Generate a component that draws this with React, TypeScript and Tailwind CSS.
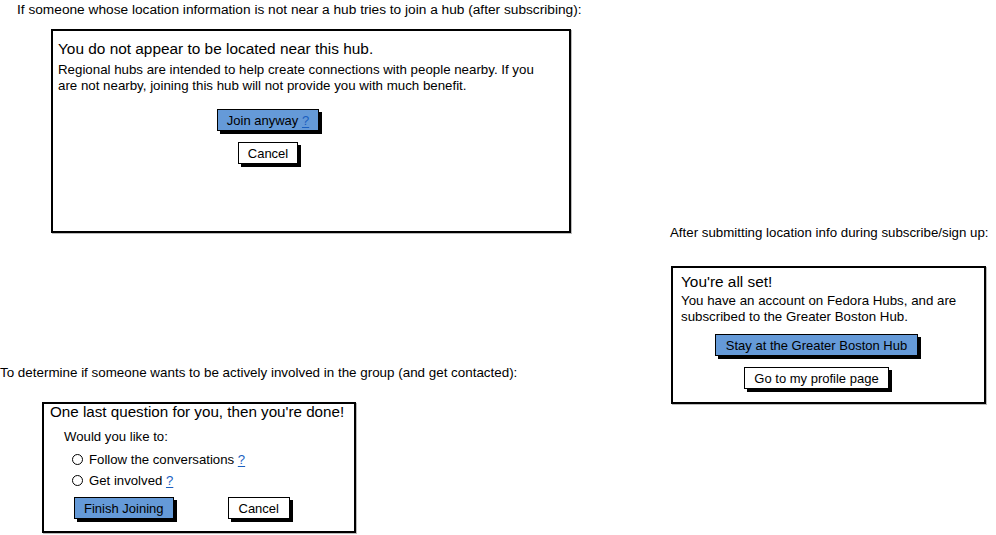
import type { ReactNode } from 'react'

const font = { fontFamily: '"Liberation Sans", Arial, sans-serif' }

function Help() {
    return <span className="text-[#1b5fbf] underline underline-offset-2">?</span>
}

function Btn({ children, primary }: { children: ReactNode; primary?: boolean }) {
    return (
        <div
            className={`inline-flex items-center justify-center h-[22px] px-[9px] border-[1.5px] border-black text-[13px] text-black leading-none shadow-[3px_3px_0_#000] ${primary ? 'bg-[#659ad8]' : 'bg-white'}`}
        >
            {children}
        </div>
    )
}

function Panel({ className, children }: { className: string; children: ReactNode }) {
    return (
        <div className={`border-2 border-black bg-white shadow-[1px_1px_0_#bbb] ${className}`}>
            {children}
        </div>
    )
}

function Radio({ children }: { children: ReactNode }) {
    return (
        <div className="flex items-center gap-[6px] h-[21px]">
            <div className="w-[11px] h-[11px] rounded-full border-[1.5px] border-black" />
            <span>{children}</span>
        </div>
    )
}

export default function App() {
    return (
        <div className="relative w-[996px] h-[535px] bg-white text-black overflow-hidden" style={font}>
            {/* Not near hub */}
            <div className="absolute left-[17px] top-[2px] text-[13.7px] leading-[16px] whitespace-nowrap">
                If someone whose location information is not near a hub tries to join a hub (after subscribing):
            </div>
            <Panel className="absolute left-[51px] top-[29px] w-[520px] h-[204px] px-[5px] pt-[8px]">
                <h2 className="text-[15.4px] leading-[20px]">You do not appear to be located near this hub.</h2>
                <p className="mt-[3px] text-[13.3px] leading-[16px]">
                    Regional hubs are intended to help create connections with people nearby. If you
                    <br />
                    are not nearby, joining this hub will not provide you with much benefit.
                </p>
                <div className="flex flex-col items-center gap-[11px] mt-[15px] pr-[86px]">
                    <Btn primary>
                        Join anyway&nbsp;<Help />
                    </Btn>
                    <Btn>Cancel</Btn>
                </div>
            </Panel>

            {/* All set */}
            <div className="absolute left-[670px] top-[225px] text-[13.3px] leading-[16px] whitespace-nowrap">
                After submitting location info during subscribe/sign up:
            </div>
            <Panel className="absolute left-[671px] top-[266px] w-[315px] h-[138px] px-[8px] pt-[4px]">
                <h2 className="text-[15.4px] leading-[20px]">You're all set!</h2>
                <p className="mt-[1px] text-[13.3px] leading-[16px]">
                    You have an account on Fedora Hubs, and are
                    <br />
                    subscribed to the Greater Boston Hub.
                </p>
                <div className="flex flex-col items-center gap-[11px] mt-[9px] pr-[24px]">
                    <Btn primary>
                        <span className="px-[1px]">Stay at the Greater Boston Hub</span>
                    </Btn>
                    <Btn>Go to my profile page</Btn>
                </div>
            </Panel>

            {/* Get involved */}
            <div className="absolute left-0 top-[365px] text-[13.4px] leading-[16px] whitespace-nowrap">
                To determine if someone wants to be actively involved in the group (and get contacted):
            </div>
            <Panel className="absolute left-[42px] top-[402px] w-[314px] h-[131px] px-[6px]">
                <h2 className="text-[15.2px] leading-[20px] mt-[-2px] whitespace-nowrap">
                    One last question for you, then you're done!
                </h2>
                <div className="pl-[14px] text-[13.2px] mt-[6px]">
                    <div className="leading-[18px]">Would you like to:</div>
                    <div className="pl-[8px] mt-[3px]">
                        <Radio>
                            Follow the conversations <Help />
                        </Radio>
                        <Radio>
                            Get involved <Help />
                        </Radio>
                    </div>
                </div>
                <div className="flex items-center gap-[54px] pl-[24px] mt-[6px]">
                    <Btn primary>Finish Joining</Btn>
                    <Btn>
                        <span className="px-[1px]">Cancel</span>
                    </Btn>
                </div>
            </Panel>
        </div>
    )
}
